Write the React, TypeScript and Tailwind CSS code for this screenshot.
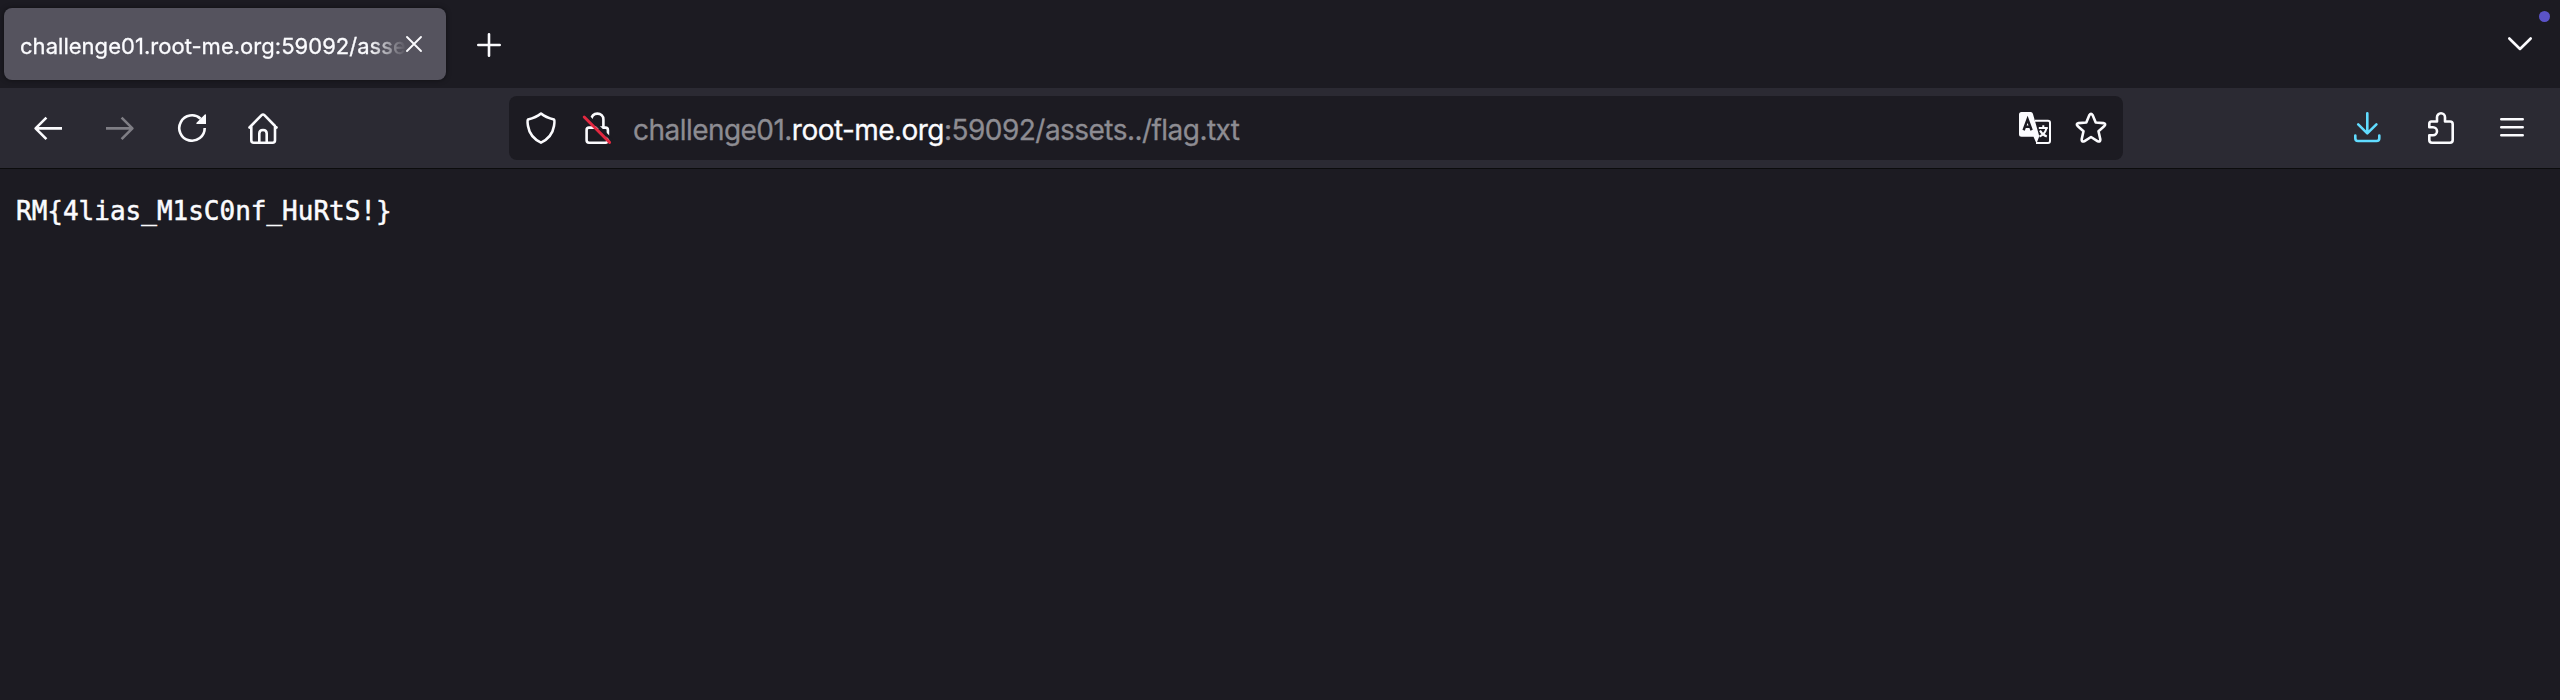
import React from "react";

type IconProps = { children: React.ReactNode; className?: string };

function Icon({ children, className = "" }: IconProps) {
  return (
    <svg
      viewBox="0 0 32 32"
      fill="none"
      stroke="currentColor"
      strokeWidth="2.6"
      className={`size-8 shrink-0 overflow-visible ${className}`}
    >
      {children}
    </svg>
  );
}

function TabStrip() {
  return (
    <div className="flex h-[88px] items-start bg-[#1c1b22] pl-1 pt-2">
      <div className="flex h-[72px] w-[442px] items-center rounded-lg bg-[#55535e] pl-4 shadow-[0_0_5px_rgba(0,0,0,0.5)]">
        <div className="w-[386px] overflow-hidden whitespace-nowrap pt-1 font-['Inter',sans-serif] text-[22px] leading-8 tracking-[0.03px] text-[#fbfbfe] [-webkit-text-stroke:0.3px] [mask-image:linear-gradient(to_right,black_350px,transparent_386px)]">
          challenge01.root-me.org:59092/assets../flag.txt
        </div>
        <svg viewBox="0 0 16 16" className="size-4 shrink-0 overflow-visible" stroke="#fbfbfe" strokeWidth="1.9" strokeLinecap="round">
          <path d="M1 1 15 15M15 1 1 15" />
        </svg>
      </div>
      <svg viewBox="0 0 24 24" className="ml-[31px] mt-[25px] size-6" stroke="#fbfbfe" strokeWidth="2.6" strokeLinecap="round">
        <path d="M12 1.300v21.400M1.300 12h21.400" />
      </svg>
      <div className="ml-auto flex items-start">
        <svg viewBox="0 0 24 14" className="mt-[28.5px] h-3.5 w-6 overflow-visible" fill="none" stroke="#fbfbfe" strokeWidth="2.6" strokeLinecap="round" strokeLinejoin="round">
          <path d="M1.3 1.5 12 12 22.7 1.5" />
        </svg>
        <div className="ml-[6.5px] mr-[10.5px] mt-[2.5px] size-[11px] rounded-full bg-[#5b53c8]" />
      </div>
    </div>
  );
}

function AddressBar() {
  return (
    <div className="ml-[229px] flex h-16 w-[1614px] items-center rounded-lg bg-[#1c1b22] px-4 text-[#fbfbfe]">
      <Icon>
        <path strokeLinejoin="round" d="M16 1.6C12.500 4.500 7.500 6.500 3 7.600C2.100 7.900 2.600 11.500 3 14C4.300 22 9.500 27.500 16 30.600C22.500 27.500 27.700 22 29 14C29.400 11.500 29.900 7.900 29 7.600C24.500 6.500 19.500 4.500 16 1.600Z" />
      </Icon>
      <Icon className="ml-6">
        <path d="M10.400 7.500C10.400 4 12.800 1.600 16.300 1.600S22.400 4 22.400 7.500V15M8.500 15.600H8a2.400 2.400 0 0 0-2.400 2.400V28.300A2.400 2.400 0 0 0 8 30.700H24.500a2.400 2.400 0 0 0 2.400-2.400V18a2.400 2.400 0 0 0-2.400-2.400H8" />
        <path stroke="#1c1b22" strokeWidth="3" d="M5.500 2.700 31 28.200" />
        <path stroke="#e22840" strokeWidth="2.900" strokeLinecap="round" d="M3.200 5 28.600 30.400" />
      </Icon>
      <div className="ml-5 whitespace-nowrap pt-[3px] font-['Inter',sans-serif] text-[28px] leading-10 tracking-[-0.54px] text-[#8d8c92] [-webkit-text-stroke:0.3px]">
        challenge01.<span className="text-[#fbfbfe]">root-me.org</span>:59092/assets../flag.txt
      </div>
      <Icon className="ml-auto">
        <path fill="currentColor" stroke="none" d="M2.500 0H11.800Q13.400 0 13.900 1.700L20.300 24.200L17.500 31.500L14.500 24.700H2.500Q0 24.700 0 22.200V2.500Q0 0 2.500 0Z" />
        <path strokeWidth="2" d="M16 8.700H29Q31 8.700 31 10.700V29Q31 31 29 31H17" />
        <path stroke="#1c1b22" strokeWidth="2.500" d="M4.600 18.200 8.600 7.300 12.600 18.200M5.800 14.700H11.500" />
        <path strokeWidth="2" d="M19.800 16H28.800M24.300 13.200V16M27.400 16.500C26.500 20 24 23 20.500 24.500M21 18.500C22.500 21.500 25 23.500 27.800 24.500" />
      </Icon>
      <Icon className="ml-6">
        <path strokeLinejoin="round" d="M14.300 3.200Q16 .6 17.700 3.200L20.700 10.500L28.400 11.100Q31.400 11.700 29.400 14L23.500 19.200L25.300 27.200Q25.600 30.300 22.800 29.300L16 25L9.200 29.300Q6.400 30.300 6.700 27.200L8.500 19.200L2.600 14Q.6 11.700 3.600 11.100L11.300 10.500Z" />
      </Icon>
    </div>
  );
}

function Toolbar() {
  return (
    <div className="flex h-20 items-center bg-[#2b2a33] pl-8 pr-8 text-[#fbfbfe]">
      <div className="flex gap-10">
        <Icon>
          <path d="M30 16.400H3.500M14.400 5.600 3.600 16.400 14.400 27.200" strokeLinejoin="round" />
        </Icon>
        <Icon className="text-[#7f7e85]">
          <path d="M2 16.400H28.500M17.600 5.600 28.400 16.400 17.600 27.200" strokeLinejoin="round" />
        </Icon>
        <Icon>
          <path d="M28.700 16A12.700 12.700 0 1 1 24.600 6.700" />
          <path fill="currentColor" stroke="none" d="M30 2.800V12H20.800Q19.800 11.500 20.500 10.800L28.800 2.500Q29.800 1.900 30 2.800Z" />
        </Icon>
        <Icon>
          <path strokeLinecap="round" strokeLinejoin="round" d="M1.500 15.500 13.600 3.200Q15 1.800 16.400 3.200L28.500 15.500M3.300 14V28.200Q3.300 30.700 5.800 30.700H24.500Q27 30.700 27 28.200V14M11.300 30V21.500Q11.300 18 15 18T18.700 21.500V30" />
        </Icon>
      </div>
      <AddressBar />
      <div className="ml-auto flex gap-10">
        <Icon className="text-[#61dcff]">
          <path strokeLinecap="round" strokeLinejoin="round" d="M15.300 1.300V20.500M6.200 12.300 15.300 21.300 24.400 12.300M3.300 23.500V26.200Q3.300 29 6 29H24.500Q27.300 29 27.300 26.200V23.500" />
        </Icon>
        <Icon>
          <path strokeLinejoin="round" d="M7.500 9.500H13V5.300A4 4 0 0 1 21 5.300V9.500H26Q28.700 9.500 28.700 12.200V28Q28.700 30.700 26 30.700H8Q5.300 30.700 5.300 28V23.200H9A4 4 0 0 0 9 15.200H5.300V11.700Q5.300 9.500 7.500 9.500Z" />
        </Icon>
        <Icon>
          <path strokeLinecap="round" d="M5.300 7.300H26.700M5.300 15.300H26.700M5.300 23.300H26.700" />
        </Icon>
      </div>
    </div>
  );
}

export default function App() {
  return (
    <div className="flex h-[700px] w-[2560px] flex-col overflow-hidden bg-[#1c1b22]">
      <TabStrip />
      <Toolbar />
      <main className="flex-1 border-t border-[#0c0c0d] px-4 pt-[26px]">
        <pre className="font-['DejaVu_Sans_Mono',monospace] text-[26px] leading-[32px] text-[#fbfbfe] [-webkit-text-stroke:0.5px]">{"RM{4lias_M1sC0nf_HuRtS!}"}</pre>
      </main>
    </div>
  );
}
